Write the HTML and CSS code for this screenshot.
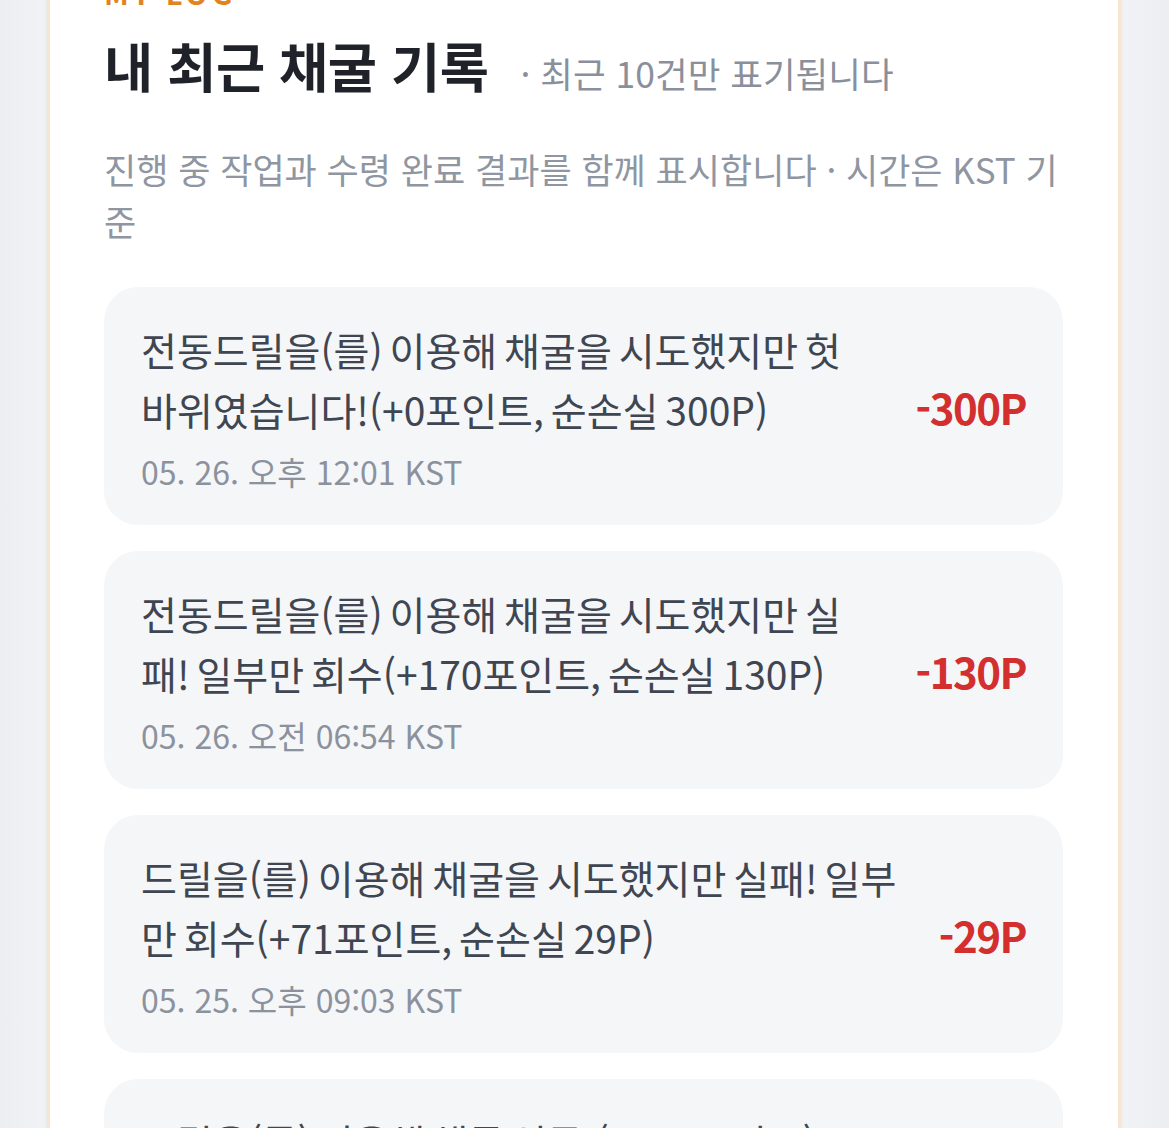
FILE: index.html
```html
<!DOCTYPE html>
<html lang="ko">
<head>
<meta charset="utf-8">
<title>내 최근 채굴 기록</title>
<link rel="stylesheet" href="styles.css">
</head>
<body>
<div class="page">
  <section class="panel">
    <div class="label">MY LOG</div>
    <div class="head">
      <h2 class="title">내 최근 채굴 기록</h2>
      <span class="sub">· 최근 10건만 표기됩니다</span>
    </div>
    <p class="desc">진행 중 작업과 수령 완료 결과를 함께 표시합니다 · 시간은 KST 기준</p>
    <ul class="list">
      <li class="item">
        <div class="body">
          <div class="msg">전동드릴을(를) 이용해 채굴을 시도했지만 헛바위였습니다!(+0포인트, 순손실 300P)</div>
          <div class="time">05. 26. 오후 12:01 KST</div>
        </div>
        <div class="amount minus">-300P</div>
      </li>
      <li class="item">
        <div class="body">
          <div class="msg">전동드릴을(를) 이용해 채굴을 시도했지만 실패! 일부만 회수(+170포인트, 순손실 130P)</div>
          <div class="time">05. 26. 오전 06:54 KST</div>
        </div>
        <div class="amount minus">-130P</div>
      </li>
      <li class="item">
        <div class="body">
          <div class="msg">드릴을(를) 이용해 채굴을 시도했지만 실패! 일부만 회수(+71포인트, 순손실 29P)</div>
          <div class="time">05. 25. 오후 09:03 KST</div>
        </div>
        <div class="amount minus">-29P</div>
      </li>
      <li class="item">
        <div class="body">
          <div class="msg">드릴을(를) 이용해 채굴 성공!(+155포인트)</div>
          <div class="time">05. 25. 오후 06:12 KST</div>
        </div>
        <div class="amount plus">+55P</div>
      </li>
    </ul>
  </section>
</div>
</body>
</html>
```

FILE: styles.css
```css
* { box-sizing: border-box; }
html, body { margin: 0; padding: 0; }
body {
  background: #edf0f3;
  font-family: "Noto Sans CJK KR", "Noto Sans", sans-serif;
  overflow: hidden;
}
.page {
  padding: 0 48px 0 47px;
  background: linear-gradient(to right, #eceef1 0, #f0f2f5 44px, #f0f2f5 calc(100% - 44px), #eceef1 100%);
}
.panel {
  background: #ffffff;
  border: 3px solid #f4e6d2;
  border-top: none;
  box-shadow: 0 0 3px rgba(236, 205, 160, 0.4);
  padding: 0 55px 40px 54px;
}
.label {
  margin-top: -22px;
  font-size: 29px;
  line-height: 28px;
  font-weight: 700;
  letter-spacing: 4px;
  color: #e1831f;
}
.head {
  display: flex;
  align-items: baseline;
  margin-top: 29px;
  height: 60px;
}
.title {
  margin: 0;
  font-size: 53.5px;
  line-height: 60px;
  font-weight: 700;
  color: #1f2329;
  letter-spacing: -0.5px;
}
.sub {
  margin-left: 32px;
  font-size: 35.5px;
  color: #8a909b;
}
.desc {
  margin: 48px 0 0;
  font-size: 35px;
  line-height: 52px;
  color: #8f96a1;
}
.list {
  list-style: none;
  margin: 40px 0 0;
  padding: 0;
  display: flex;
  flex-direction: column;
  gap: 26px;
}
.item {
  display: flex;
  align-items: center;
  background: #f5f6f8;
  border-radius: 34px;
  padding: 32px 37px 32px 37px;
}
.body {
  flex: 1;
  min-width: 0;
}
.msg {
  font-size: 39px;
  line-height: 60px;
  word-spacing: -4px;
  color: #3f4652;
}
.time {
  margin-top: 10px;
  font-size: 32px;
  line-height: 44px;
  color: #8b929d;
}
.amount {
  flex: none;
  margin-left: 40px;
  font-size: 42px;
  font-weight: 700;
  letter-spacing: -1.5px;
}
.minus { color: #d32f2f; }
.plus { color: #1f9d55; }
```
